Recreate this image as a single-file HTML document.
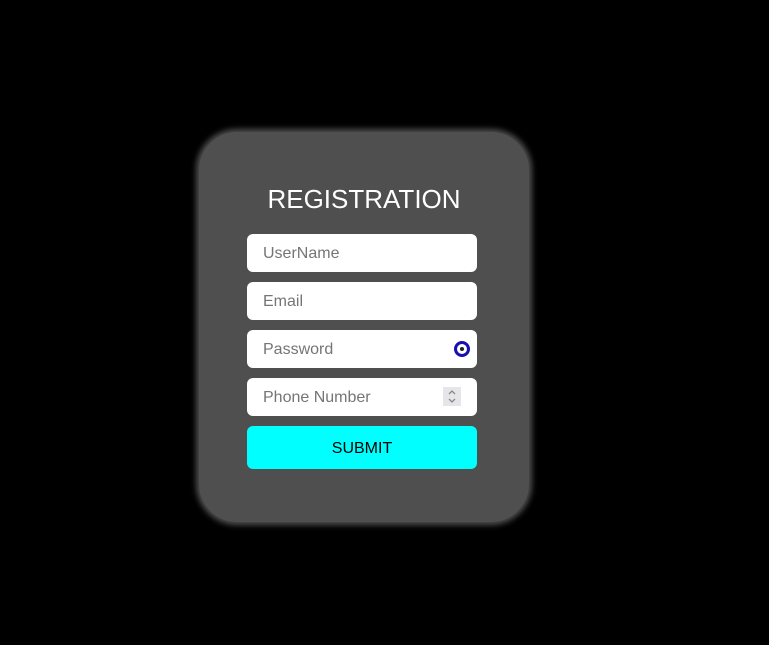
<!DOCTYPE html>
<html><head><style>
html,body{margin:0;padding:0;background:#000;width:769px;height:645px;overflow:hidden;font-family:"Liberation Sans",sans-serif;}
.card{position:absolute;left:199px;top:132px;width:330px;height:390px;background:#4f4f4f;border-radius:38px;box-shadow:0 0 6px 3px #4f4f4f;}
h1{position:absolute;left:197px;top:181px;width:334px;margin:0;text-align:center;color:#fff;font-weight:normal;font-size:26px;line-height:36px;letter-spacing:0;}
.in{position:absolute;left:247px;width:230px;height:38px;background:#fff;border-radius:6px;}
.in span{position:absolute;left:16px;top:1px;line-height:38px;font-size:16px;color:#757575;}
.btn{position:absolute;left:247px;top:426px;width:230px;height:43px;background:#0ff;border-radius:6px;text-align:center;line-height:45px;font-size:16px;color:#000;}
.eye{position:absolute;right:7px;top:11px;width:10px;height:10px;border:3px solid #1a0fb0;border-radius:50%;background:#fff;}
.eye:after{content:"";position:absolute;left:3px;top:3px;width:4px;height:4px;border-radius:50%;background:#222;}
.spin{position:absolute;right:16px;top:9px;width:18px;height:19px;background:#e6e6ea;}
</style></head><body>
<div class="card"></div>
<h1>REGISTRATION</h1>
<div class="in" style="top:234px"><span>UserName</span></div>
<div class="in" style="top:282px"><span>Email</span></div>
<div class="in" style="top:330px"><span>Password</span><div class="eye"></div></div>
<div class="in" style="top:378px"><span>Phone Number</span><div class="spin"><svg width="18" height="19"><path d="M6 7l3-3 3 3M6 12l3 3 3-3" fill="none" stroke="#888" stroke-width="1.3"/></svg></div></div>
<div class="btn">SUBMIT</div>
</body></html>
